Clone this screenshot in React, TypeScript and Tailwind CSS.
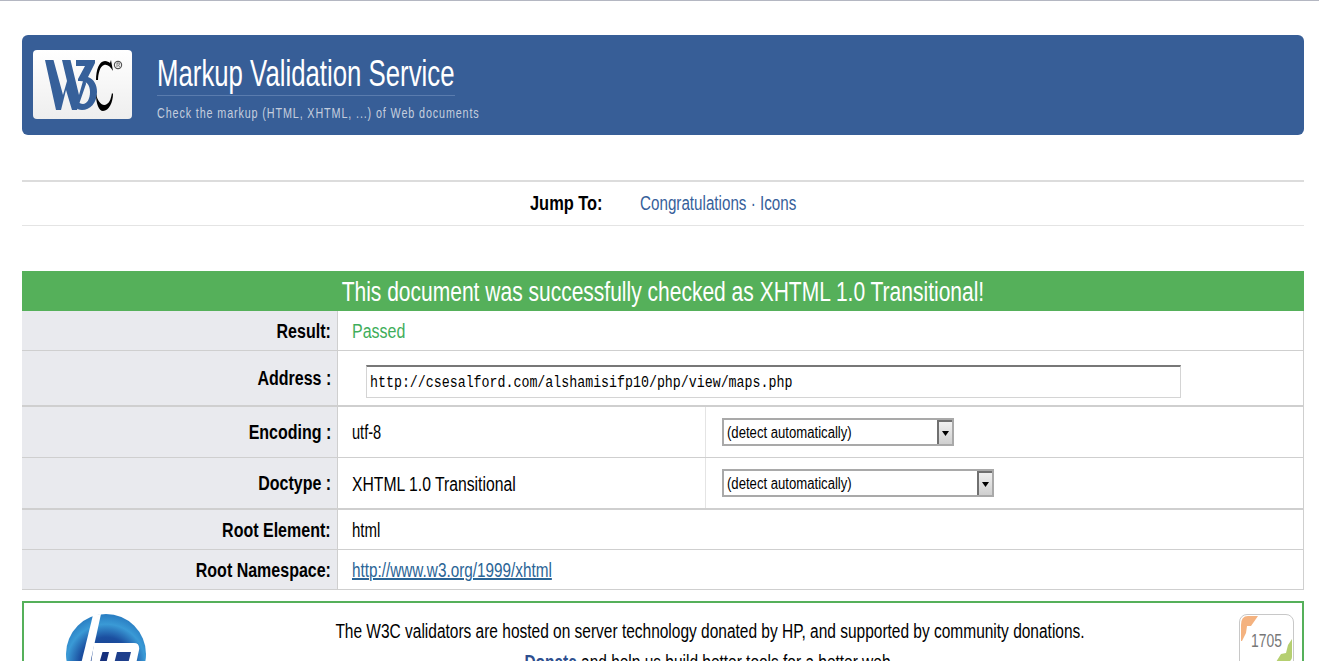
import React from "react";

function Squeeze({
  children,
  className = "",
}: {
  children: React.ReactNode;
  className?: string;
}) {
  return (
    <span className={`inline-block whitespace-nowrap ${className}`}>
      {children}
    </span>
  );
}

function W3cLogo() {
  return (
    <svg width="99" height="69" viewBox="0 0 99 69" className="block">
      <path
        fill="#36609a"
        d="M12 10H20.500L30 45 34 31 29 10H37.500L46 45 52 24 53 34 44 60H39L33 40 28 60H23Z"
      />
      <path
        fill="#36609a"
        d="M43 10H62V13L55 27C61 29 64 35 64 42 64 53 57 60 49 60 46 60 44 59 42 57L44 51C46 53 48 54 50 54 54 54 57 49 57 42 57 34 53 31 47 31H45V29L52 16H43Z"
      />
      <path
        fill="#000"
        d="M78 10L80 21C77 16 74 14 71 15 67 16 65 24 65 30H63C63 20 66 11 72 11 74 11 76 12 77 13Z"
      />
      <path
        fill="#000"
        d="M63 44C65 53 70 57 74 54 77 52 78 48 79 43L80 44C80 52 76 61 70 61 66 61 63 54 63 44Z"
      />
      <circle cx="85" cy="15" r="3.600" fill="none" stroke="#555" strokeWidth="1.200" />
      <path d="M84 17v-4h1.500q1 0 1 1t-1 1l1 2" fill="none" stroke="#555" strokeWidth="0.800" />
    </svg>
  );
}

function HpLogo() {
  return (
    <svg width="80" height="80" viewBox="0 0 80 80" className="block">
      <defs>
        <radialGradient id="hpBlue" cx="50%" cy="62%" r="60%">
          <stop offset="0" stopColor="#152f7c" />
          <stop offset="0.55" stopColor="#1b4fa0" />
          <stop offset="0.82" stopColor="#3a9ad6" />
          <stop offset="1" stopColor="#2b80c4" />
        </radialGradient>
      </defs>
      <circle cx="40" cy="40" r="40" fill="url(#hpBlue)" />
      <path fill="#fff" d="M27 1 35 0 24 50 15 50Z" />
      <path fill="#fff" d="M28 29H68Q74 29 73 36L70 50H25Z" />
      <path fill="#152f7c" d="M36.500 38H43L40 50H33Z" />
      <path fill="#1e3f8c" d="M51 38H65L62 50H48Z" />
    </svg>
  );
}

function CountBadge() {
  return (
    <div className="relative h-[70px] w-[55px] rounded-lg border border-[#c8c8c8] bg-white">
      <svg width="53" height="68" viewBox="0 0 53 68" className="absolute left-0 top-0">
        <path fill="#f4b27f" d="M1 10Q1 1 8 1H18L11 11H7L6 18 2 26H1Z" />
        <path fill="#b5cf70" d="M52 24V42Q52 47 46 47H36L41 39 46 38 48 30Z" />
      </svg>
      <span className="absolute left-[11px] top-[14px] inline-block origin-left scale-x-[0.73] text-[19px] leading-6 text-[#777777]">
        1705
      </span>
    </div>
  );
}

function FakeSelect({ width }: { width: string }) {
  return (
    <div className={`flex h-7 items-stretch border-2 border-[#a9a9a9] bg-white ${width}`}>
      <div className="flex-1 pl-[3px] pt-[1px] text-[16px] leading-6 text-black">
        <Squeeze className="origin-left scale-x-[0.82]">(detect automatically)</Squeeze>
      </div>
      <div className="flex w-[15px] items-center justify-center border-l-2 border-t-2 border-[#707070] bg-gradient-to-b from-[#f0f0f0] to-[#cfcfcf]">
        <svg width="7" height="5" viewBox="0 0 7 5">
          <path d="M0 0h7L3.500 5z" fill="#000" />
        </svg>
      </div>
    </div>
  );
}

function Row({
  label,
  className,
  children,
}: {
  label: string;
  className: string;
  children: React.ReactNode;
}) {
  return (
    <div className={`flex border-[#cfcfcf] ${className}`}>
      <div className="flex w-[316px] shrink-0 items-center justify-end border-r border-[#cfcfcf] bg-[#e9eaee] pr-[6px] text-[20px] font-bold text-black">
        <Squeeze className="origin-right scale-x-[0.8]">{label}</Squeeze>
      </div>
      <div className="flex min-w-0 flex-1 items-center">{children}</div>
    </div>
  );
}

export default function App() {
  return (
    <div className="h-screen overflow-hidden bg-white font-['Liberation_Sans',Arial,sans-serif]">
      <div className="h-px bg-[#b4b7c2]" />

      <div className="pl-[22px] pr-[15px]">
        {/* Banner */}
        <div className="mt-[34px] flex h-[100px] rounded-md bg-[#375e97] pl-[11px] pt-[15px]">
          <div className="h-[69px] w-[99px] rounded-sm bg-gradient-to-b from-white to-[#eeeeee]">
            <W3cLogo />
          </div>
          <div className="ml-[25px]">
            <div className="mt-[3px] h-[43px] w-[298px] border-b border-[#5a7cae] text-[36px] leading-[42px] text-white">
              <Squeeze className="origin-left scale-x-[0.716]">Markup Validation Service</Squeeze>
            </div>
            <div className="mt-[9px] text-[15px] leading-4 tracking-[1.2px] text-[#c5cede]">
              <Squeeze className="origin-left scale-x-[0.72]">
                Check the markup (HTML, XHTML, ...) of Web documents
              </Squeeze>
            </div>
          </div>
        </div>

        {/* Jump links */}
        <div className="mt-[45px] flex h-[46px] items-center border-t-2 border-b border-t-[#dcdcdc] border-b-[#e4e4e4] pb-[2px] pl-[508px] text-[20px]">
          <Squeeze className="origin-left scale-x-[0.82] font-bold text-black">Jump To:</Squeeze>
          <Squeeze className="ml-[21px] origin-left scale-x-[0.76] text-[#36609a]">
            Congratulations · Icons
          </Squeeze>
        </div>

        {/* Result */}
        <div className="mt-[45px] flex h-10 items-center justify-center bg-[#55b05a] pt-[2px] text-[27px] text-white">
          <Squeeze className="scale-x-[0.778]">
            This document was successfully checked as XHTML 1.0 Transitional!
          </Squeeze>
        </div>

        <div className="border-r border-[#cfcfcf] text-[20px] text-black">
          <Row label="Result:" className="h-10 border-b">
            <Squeeze className="ml-[14px] origin-left scale-x-[0.8] text-[#3fae5b]">Passed</Squeeze>
          </Row>
          <Row label="Address :" className="h-[56px] border-b-2">
            <div className="ml-[28px] mt-[6px] flex h-[33px] w-[815px] items-center border-x border-b border-t-2 border-x-[#d4d4d4] border-b-[#d4d4d4] border-t-[#777777] pl-[3px] pt-[2px] font-['Liberation_Mono',monospace] text-[16px] text-black">
              <Squeeze className="origin-left scale-x-[0.83]">
                http://csesalford.com/alshamisifp10/php/view/maps.php
              </Squeeze>
            </div>
          </Row>
          <Row label="Encoding :" className="h-[51px] border-b">
            <div className="flex h-full flex-1 items-center">
              <div className="flex h-full w-[368px] items-center border-r border-[#e4e4e4] pl-[14px]">
                <Squeeze className="origin-left scale-x-[0.73]">utf-8</Squeeze>
              </div>
              <div className="ml-4">
                <FakeSelect width="w-[232px]" />
              </div>
            </div>
          </Row>
          <Row label="Doctype :" className="h-[52px] border-b-2">
            <div className="flex h-full flex-1 items-center">
              <div className="flex h-full w-[368px] items-center border-r border-[#e4e4e4] pl-[14px] pt-[2px]">
                <Squeeze className="origin-left scale-x-[0.786]">XHTML 1.0 Transitional</Squeeze>
              </div>
              <div className="ml-4">
                <FakeSelect width="w-[272px]" />
              </div>
            </div>
          </Row>
          <Row label="Root Element:" className="h-[40px] border-b">
            <Squeeze className="ml-[14px] origin-left scale-x-[0.75]">html</Squeeze>
          </Row>
          <Row label="Root Namespace:" className="h-[40px] border-b">
            <a href="#" className="ml-[14px] text-[#2b6596]">
              <Squeeze className="origin-left scale-x-[0.765] underline">
                http://www.w3.org/1999/xhtml
              </Squeeze>
            </a>
          </Row>
        </div>

        {/* Sponsor */}
        <div className="mt-[11px] flex h-[140px] border-2 border-[#55b05a] text-[20px] text-black">
          <div className="ml-[42px] mt-[11px] shrink-0">
            <HpLogo />
          </div>
          <div className="flex-1 pl-[35px] pt-[16px] text-center leading-6">
            <div>
              <Squeeze className="scale-x-[0.774]">
                The W3C validators are hosted on server technology donated by HP, and supported by community donations.
              </Squeeze>
            </div>
            <div className="mt-[7px]">
              <Squeeze className="scale-x-[0.773]">
                <a href="#" className="font-bold text-[#2e4f8f]">Donate</a> and help us build better tools for a better web.
              </Squeeze>
            </div>
          </div>
          <div className="mr-2 mt-[11px] shrink-0">
            <CountBadge />
          </div>
        </div>
      </div>
    </div>
  );
}
